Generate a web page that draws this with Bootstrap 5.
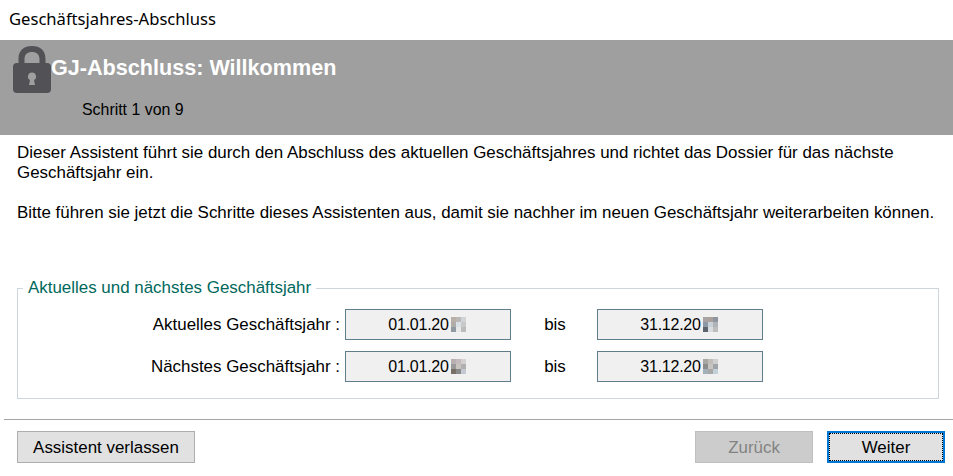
<!DOCTYPE html>
<html lang="de">
<head>
<meta charset="utf-8">
<title>Geschäftsjahres-Abschluss</title>
<link href="https://cdn.jsdelivr.net/npm/bootstrap@5.3.0/dist/css/bootstrap.min.css" rel="stylesheet">
<style>
html,body{height:476px;overflow:hidden;background:#fff}
body{font-family:"Liberation Sans",Arial,sans-serif;font-size:16.93px;color:#000;line-height:20px}
.wiz-title{height:40px;padding:9px 0 0 9px;font-family:"Noto Sans","Open Sans",sans-serif;font-size:16.6px;line-height:20px;color:#000}
.wiz-head{height:95px;background:#9f9f9f;padding:4px 0 0 13px}
.wiz-lock{width:38px;height:49px;flex:none}
.wiz-h{font-size:21.6px;font-weight:700;color:#fff;line-height:24px;margin:12px 0 0 0}
.wiz-step{font-size:15.9px;line-height:18px;margin:0 0 0 31px;padding-top:21px}
.wiz-body{padding:8px 17px 0;height:144px}
.wiz-body p{margin:0}
.wiz-gap{margin-top:20px!important}
.wiz-fs{margin:0 14px 0 17px;border:1px solid #cdd6dc;padding:0;height:120px;position:relative}
.wiz-fs legend{float:none;width:auto;margin:0 0 12px 5px;padding:0 5px;font-size:16.93px;line-height:18px;color:#00695c}
.wiz-row{height:31px;margin-bottom:11px}
.wiz-label{width:327px;text-align:right;padding-right:5px}
.wiz-box{width:166px;height:31px;background:#f0f0f0;border:1px solid #607d8b;display:flex;align-items:center;justify-content:center;font-size:16px;letter-spacing:-.25px}
.wiz-bis{width:86px;text-align:center;padding-left:2px}
.wiz-blur{display:block;width:19px;height:15px;flex:none}
.wiz-sep{height:1px;background:#a5a5a5;margin:0 0 0 4px}
.wiz-spacer{height:20px}
.wiz-foot{padding:11px 8px 0 17px;gap:14px}
.wiz-btn{height:32px;width:118px;border:1px solid #adadad;border-radius:0;background:#e1e1e1;color:#000;font-size:16.93px;padding:1px 0 0;line-height:20px}
.wiz-btn.wide{width:178px}
.wiz-btn:disabled{background:#ccc;border-color:#bfbfbf;color:#838383;opacity:1}
.wiz-btn.act{border:2px solid #0078d7;outline:1px dotted #000;outline-offset:-3px}
</style>
</head>
<body>
<div class="wiz-title">Geschäftsjahres-Abschluss</div>
<div class="wiz-head d-flex">
  <svg class="wiz-lock" viewBox="0 0 38 49"><path d="M5.500 20V15C5.500 6 11 2 19 2s13.500 4 13.500 13v5h-6v-5c0-4.500-3-7-7.500-7s-7.500 2.500-7.500 7v5z" fill="#515156"/><rect x="0" y="19" width="38" height="30" rx="4" fill="#515156"/><path d="M19 28.500a4 4 0 0 1 2 7.500l1 5h-6l1-5a4 4 0 0 1 2-7.500z" fill="#9f9f9f"/></svg>
  <div>
    <div class="wiz-h">GJ-Abschluss: Willkommen</div>
    <div class="wiz-step">Schritt 1 von 9</div>
  </div>
</div>
<div class="wiz-body">
  <p>Dieser Assistent führt sie durch den Abschluss des aktuellen Geschäftsjahres und richtet das Dossier für das nächste Geschäftsjahr ein.</p>
  <p class="wiz-gap">Bitte führen sie jetzt die Schritte dieses Assistenten aus, damit sie nachher im neuen Geschäftsjahr weiterarbeiten können.</p>
</div>
<fieldset class="wiz-fs">
  <legend>Aktuelles und nächstes Geschäftsjahr</legend>
  <div class="d-flex align-items-center wiz-row">
    <div class="wiz-label">Aktuelles Geschäftsjahr :</div>
    <div class="wiz-box">01.01.20<svg class="wiz-blur" viewBox="0 0 3 3" shape-rendering="crispEdges"><rect width="1" height="1" fill="#b8b0a8"/><rect x="1" width="1" height="1" fill="#bcb8b8"/><rect x="2" width="1" height="1" fill="#d0d4d8"/><rect y="1" width="1" height="1" fill="#b0aca8"/><rect x="1" y="1" width="1" height="1" fill="#d8e0e8"/><rect x="2" y="1" width="1" height="1" fill="#c8c8c8"/><rect y="2" width="1" height="1" fill="#8f9aa3"/><rect x="1" y="2" width="1" height="1" fill="#e8e8e8"/><rect x="2" y="2" width="1" height="1" fill="#bcbcbc"/></svg></div>
    <div class="wiz-bis">bis</div>
    <div class="wiz-box">31.12.20<svg class="wiz-blur" viewBox="0 0 3 3" shape-rendering="crispEdges"><rect width="1" height="1" fill="#a8a4a4"/><rect x="1" width="1" height="1" fill="#aaa09c"/><rect x="2" width="1" height="1" fill="#8f96a0"/><rect y="1" width="1" height="1" fill="#8c98a6"/><rect x="1" y="1" width="1" height="1" fill="#c8d0d8"/><rect x="2" y="1" width="1" height="1" fill="#b0b4b8"/><rect y="2" width="1" height="1" fill="#5c646e"/><rect x="1" y="2" width="1" height="1" fill="#d8dde2"/><rect x="2" y="2" width="1" height="1" fill="#bdbdbd"/></svg></div>
  </div>
  <div class="d-flex align-items-center wiz-row">
    <div class="wiz-label">Nächstes Geschäftsjahr :</div>
    <div class="wiz-box">01.01.20<svg class="wiz-blur" viewBox="0 0 3 3" shape-rendering="crispEdges"><rect width="1" height="1" fill="#b8b0b0"/><rect x="1" width="1" height="1" fill="#c4bcbc"/><rect x="2" width="1" height="1" fill="#d4d0d0"/><rect y="1" width="1" height="1" fill="#9a9a9a"/><rect x="1" y="1" width="1" height="1" fill="#c8c4c0"/><rect x="2" y="1" width="1" height="1" fill="#b0b0b0"/><rect y="2" width="1" height="1" fill="#776f66"/><rect x="1" y="2" width="1" height="1" fill="#8a8a8a"/><rect x="2" y="2" width="1" height="1" fill="#c4c8d0"/></svg></div>
    <div class="wiz-bis">bis</div>
    <div class="wiz-box">31.12.20<svg class="wiz-blur" viewBox="0 0 3 3" shape-rendering="crispEdges"><rect width="1" height="1" fill="#aaa6a4"/><rect x="1" width="1" height="1" fill="#c0bcb8"/><rect x="2" width="1" height="1" fill="#cfcfcf"/><rect y="1" width="1" height="1" fill="#8c8c8c"/><rect x="1" y="1" width="1" height="1" fill="#c8c4c0"/><rect x="2" y="1" width="1" height="1" fill="#a0a4a8"/><rect y="2" width="1" height="1" fill="#a4b0b8"/><rect x="1" y="2" width="1" height="1" fill="#a8a8a8"/><rect x="2" y="2" width="1" height="1" fill="#c4d0d8"/></svg></div>
  </div>
</fieldset>
<div class="wiz-spacer"></div>
<div class="wiz-sep"></div>
<div class="wiz-foot d-flex">
  <button class="btn wiz-btn wide me-auto" type="button">Assistent verlassen</button>
  <button class="btn wiz-btn" type="button" disabled>Zurück</button>
  <button class="btn wiz-btn act" type="button">Weiter</button>
</div>
</body>
</html>
